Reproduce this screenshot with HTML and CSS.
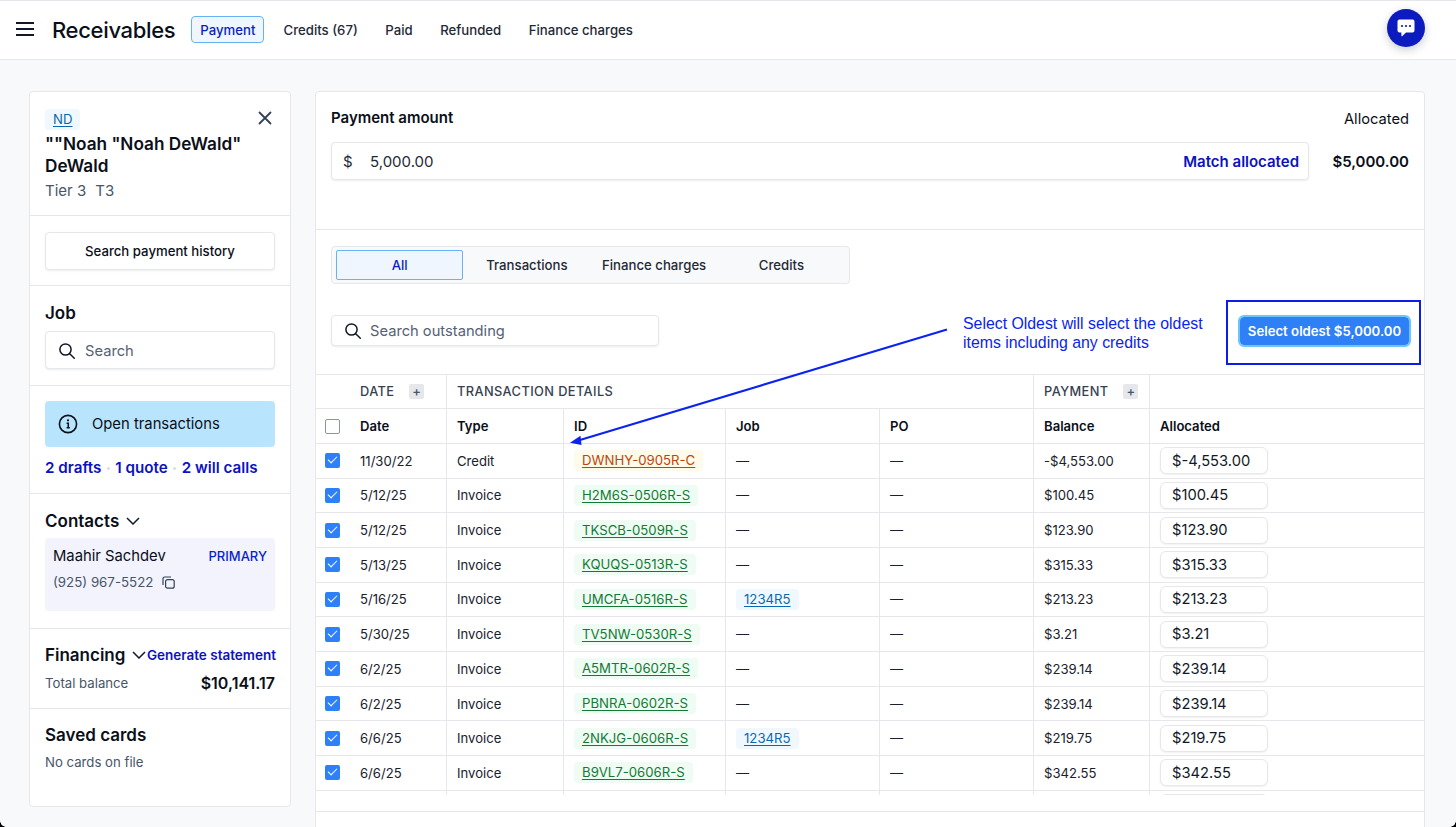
FILE: index.html
```html
<!DOCTYPE html>
<html lang="en">
<head>
<meta charset="utf-8">
<title>Receivables</title>
<link rel="stylesheet" href="styles.css">
</head>
<body>
<header class="topbar">
  <svg class="menu" width="18" height="14" viewBox="0 0 18 14"><path d="M0 1h18M0 7h18M0 13h18" stroke="#111827" stroke-width="2"/></svg>
  <h1 class="title">Receivables</h1>
  <nav class="nav">
    <a class="nav-item active">Payment</a>
    <a class="nav-item">Credits (67)</a>
    <a class="nav-item">Paid</a>
    <a class="nav-item">Refunded</a>
    <a class="nav-item">Finance charges</a>
  </nav>
  <button class="chat">
    <svg width="20" height="20" viewBox="0 0 20 20"><path d="M3.5 1.5h13a2 2 0 0 1 2 2v9a2 2 0 0 1-2 2H10l-3.6 3.6c-.4.4-1 .1-1-.4v-3.2H3.5a2 2 0 0 1-2-2v-9a2 2 0 0 1 2-2z" fill="#fff"/><circle cx="6" cy="8" r="1.1" fill="#0b1bbd"/><circle cx="10" cy="8" r="1.1" fill="#0b1bbd"/><circle cx="14" cy="8" r="1.1" fill="#0b1bbd"/></svg>
  </button>
</header>
<main class="main">
  <aside class="side">
    <section class="s s-head">
      <div class="head-top">
        <a class="tag tag-blue">ND</a>
        <svg class="close" width="14" height="14" viewBox="0 0 14 14"><path d="M1.5 1.5l11 11M12.5 1.5l-11 11" stroke="#334155" stroke-width="1.8" stroke-linecap="round"/></svg>
      </div>
      <div class="name">""Noah "Noah DeWald" DeWald</div>
      <div class="tier"><span>Tier 3</span><span>T3</span></div>
    </section>
    <section class="s s-btn"><button class="ghost">Search payment history</button></section>
    <section class="s s-job">
      <h2 class="h">Job</h2>
      <div class="field side-search">
        <svg width="18" height="18" viewBox="0 0 18 18"><circle cx="7.5" cy="7.5" r="5.6" fill="none" stroke="#111827" stroke-width="1.5"/><path d="M11.7 11.7l4.6 4.6" stroke="#111827" stroke-width="1.5" stroke-linecap="round"/></svg>
        <span class="ph">Search</span>
      </div>
    </section>
    <section class="s s-open">
      <div class="open-box">
        <svg width="20" height="20" viewBox="0 0 20 20"><circle cx="10" cy="10" r="8.6" fill="none" stroke="#0b0f19" stroke-width="1.6"/><circle cx="10" cy="6.3" r="1.1" fill="#0b0f19"/><path d="M8.6 9.3H10.3V13.6M8.6 13.8h3.2" fill="none" stroke="#0b0f19" stroke-width="1.5"/></svg>
        <span>Open transactions</span>
      </div>
      <div class="open-links"><a>2 drafts</a><i></i><a>1 quote</a><i></i><a>2 will calls</a></div>
    </section>
    <section class="s s-contacts">
      <h2 class="h h-row">Contacts <svg width="14" height="8" viewBox="0 0 14 8"><path d="M1 1l6 6 6-6" fill="none" stroke="#111827" stroke-width="1.5"/></svg></h2>
      <div class="contact">
        <div class="contact-top"><span class="c-name">Maahir Sachdev</span><span class="primary">PRIMARY</span></div>
        <div class="phone">(925) 967-5522
          <svg width="13" height="13" viewBox="0 0 13 13"><rect x="3.6" y="3.6" width="8.6" height="8.6" rx="2" fill="none" stroke="#334155" stroke-width="1.2"/><path d="M1 9V2.4A1.6 1.6 0 0 1 2.6 1H9" fill="none" stroke="#334155" stroke-width="1.2"/></svg>
        </div>
      </div>
    </section>
    <section class="s s-fin">
      <div class="fin-top">
        <h2 class="h h-row">Financing <svg width="14" height="8" viewBox="0 0 14 8"><path d="M1 1l6 6 6-6" fill="none" stroke="#111827" stroke-width="1.5"/></svg></h2>
        <a class="gen">Generate statement</a>
      </div>
      <div class="fin-row"><span class="muted">Total balance</span><b class="bal">$10,141.17</b></div>
    </section>
    <section class="s s-cards">
      <h2 class="h">Saved cards</h2>
      <div class="muted">No cards on file</div>
    </section>
  </aside>

  <section class="panel">
    <div class="pay">
      <div class="pay-labels"><span class="pay-title">Payment amount</span><span class="pay-alloc">Allocated</span></div>
      <div class="pay-row">
        <div class="field pay-input"><span class="dollar">$</span><span class="amount">5,000.00</span><a class="match">Match allocated</a></div>
        <b class="pay-total">$5,000.00</b>
      </div>
    </div>
    <div class="filters">
      <div class="tabs">
        <a class="tab on">All</a><a class="tab">Transactions</a><a class="tab">Finance charges</a><a class="tab">Credits</a>
      </div>
      <div class="tools">
        <div class="field out-search">
          <svg width="18" height="18" viewBox="0 0 18 18"><circle cx="7.5" cy="7.5" r="5.6" fill="none" stroke="#111827" stroke-width="1.5"/><path d="M11.7 11.7l4.6 4.6" stroke="#111827" stroke-width="1.5" stroke-linecap="round"/></svg>
          <span class="ph">Search outstanding</span>
        </div>
        <button class="oldest">Select oldest $5,000.00</button>
      </div>
    </div>

    <div class="grid-wrap">
      <div class="grid">
        <div class="c gh g-date">DATE <span class="plus">+</span></div>
        <div class="c gh g-det">TRANSACTION DETAILS</div>
        <div class="c gh">PAYMENT <span class="plus">+</span></div>
        <div class="c gh end"></div>

        <div class="c th first"><span class="cb off"></span>Date</div>
        <div class="c th">Type</div>
        <div class="c th">ID</div>
        <div class="c th">Job</div>
        <div class="c th">PO</div>
        <div class="c th">Balance</div>
        <div class="c th end">Allocated</div>

        <div class="c first"><span class="cb"></span>11/30/22</div><div class="c">Credit</div><div class="c"><a class="tag tag-o">DWNHY-0905R-C</a></div><div class="c">—</div><div class="c">—</div><div class="c">-$4,553.00</div><div class="c end"><span class="inp">$-4,553.00</span></div>

        <div class="c first"><span class="cb"></span>5/12/25</div><div class="c">Invoice</div><div class="c"><a class="tag tag-g">H2M6S-0506R-S</a></div><div class="c">—</div><div class="c">—</div><div class="c">$100.45</div><div class="c end"><span class="inp">$100.45</span></div>

        <div class="c first"><span class="cb"></span>5/12/25</div><div class="c">Invoice</div><div class="c"><a class="tag tag-g">TKSCB-0509R-S</a></div><div class="c">—</div><div class="c">—</div><div class="c">$123.90</div><div class="c end"><span class="inp">$123.90</span></div>

        <div class="c first"><span class="cb"></span>5/13/25</div><div class="c">Invoice</div><div class="c"><a class="tag tag-g">KQUQS-0513R-S</a></div><div class="c">—</div><div class="c">—</div><div class="c">$315.33</div><div class="c end"><span class="inp">$315.33</span></div>

        <div class="c first"><span class="cb"></span>5/16/25</div><div class="c">Invoice</div><div class="c"><a class="tag tag-g">UMCFA-0516R-S</a></div><div class="c"><a class="tag tag-blue">1234R5</a></div><div class="c">—</div><div class="c">$213.23</div><div class="c end"><span class="inp">$213.23</span></div>

        <div class="c first"><span class="cb"></span>5/30/25</div><div class="c">Invoice</div><div class="c"><a class="tag tag-g">TV5NW-0530R-S</a></div><div class="c">—</div><div class="c">—</div><div class="c">$3.21</div><div class="c end"><span class="inp">$3.21</span></div>

        <div class="c first"><span class="cb"></span>6/2/25</div><div class="c">Invoice</div><div class="c"><a class="tag tag-g">A5MTR-0602R-S</a></div><div class="c">—</div><div class="c">—</div><div class="c">$239.14</div><div class="c end"><span class="inp">$239.14</span></div>

        <div class="c first"><span class="cb"></span>6/2/25</div><div class="c">Invoice</div><div class="c"><a class="tag tag-g">PBNRA-0602R-S</a></div><div class="c">—</div><div class="c">—</div><div class="c">$239.14</div><div class="c end"><span class="inp">$239.14</span></div>

        <div class="c first"><span class="cb"></span>6/6/25</div><div class="c">Invoice</div><div class="c"><a class="tag tag-g">2NKJG-0606R-S</a></div><div class="c"><a class="tag tag-blue">1234R5</a></div><div class="c">—</div><div class="c">$219.75</div><div class="c end"><span class="inp">$219.75</span></div>

        <div class="c first"><span class="cb"></span>6/6/25</div><div class="c">Invoice</div><div class="c"><a class="tag tag-g">B9VL7-0606R-S</a></div><div class="c">—</div><div class="c">—</div><div class="c">$342.55</div><div class="c end"><span class="inp">$342.55</span></div>

        <div class="c first"></div><div class="c"></div><div class="c"></div><div class="c"></div><div class="c"></div><div class="c"></div><div class="c end"><span class="inp"></span></div>
      </div>
    </div>
    <div class="panel-foot"></div>

    <div class="note">Select Oldest will select the oldest<br>items including any credits</div>
    <div class="note-box"></div>
    <svg class="arrow" width="400" height="130" viewBox="0 0 400 130"><path d="M381 1.5L14 112" stroke="#0a23ee" stroke-width="2.2" fill="none"/><path d="M4 114.7L14.5 107.7L15.5 117Z" fill="#0a23ee"/></svg>
  </section>
</main>
</body>
</html>
```
FILE: styles.css
```css
* { box-sizing: border-box; }
html, body { margin: 0; height: 827px; overflow: hidden; }
body { font-family: Inter, "Noto Sans", sans-serif; background: #f8f9fb; color: #0b0f19; font-size: 13px; }
body::before, body::after { content: ""; position: fixed; bottom: 0; width: 6px; height: 6px; z-index: 5; }
body::before { left: 0; background: radial-gradient(circle at 100% 0, transparent 5.5px, #000 6px); }
body::after { right: 0; background: radial-gradient(circle at 0 0, transparent 5.5px, #000 6px); }
a { color: inherit; }
button { font-family: inherit; cursor: pointer; }
h1, h2 { margin: 0; }

.topbar { height: 60px; background: #fff; border-top: 1px solid #e5e7eb; border-bottom: 1px solid #e5e7eb; display: flex; align-items: center; padding: 0 31px 1px 16px; }
.menu { flex: none; margin: -2px 18px 0 0; }
.title { font-size: 22px; font-weight: 500; letter-spacing: -.33px; color: #0b0f19; margin-right: 16px; }
.nav { display: flex; align-items: center; gap: 3px; }
.nav-item { font-size: 13.2px; font-weight: 500; color: #1f2937; padding: 0 8px; height: 27px; line-height: 26px; border: 1px solid transparent; border-radius: 4px; margin-right: 6.5px; }
.nav-item.active { color: #0b1fc0; background: #eff6ff; border-color: #66b2f5; margin-right: 7px; }
.chat { margin: -4px 0 0 auto; width: 38px; height: 38px; border-radius: 50%; border: 0; background: #0b1bbd; box-shadow: 0 3px 8px rgba(15, 23, 42, .22); display: flex; align-items: center; justify-content: center; padding: 0; }

.main { display: flex; gap: 24px; padding: 31px 31px 0 29px; }
.side { flex: none; width: 262px; height: 716px; background: #fff; border: 1px solid #e5e7eb; border-radius: 4px; }
.s { padding: 16px 15px; border-bottom: 1px solid #e5e7eb; }
.s:last-child { border-bottom: 0; }
.s-head { height: 124px; padding-top: 17px; }
.head-top { display: flex; justify-content: space-between; align-items: flex-start; height: 21px; }
.close { margin: 2px 3px 0 0; }
.name { font-size: 17.2px; font-weight: 600; line-height: 22px; color: #0b0f19; margin-top: 3px; width: 224px; }
.tier { display: flex; gap: 9px; font-size: 15px; line-height: 20px; color: #475569; margin-top: 4px; }
.s-btn { height: 70px; }
.ghost { width: 100%; height: 38px; background: #fff; border: 1px solid #e5e7eb; border-radius: 4px; box-shadow: 0 1px 2px rgba(15, 23, 42, .08); font-size: 13.2px; font-weight: 500; color: #0b0f19; }
.s-job { height: 100px; padding-top: 16px; }
.h { font-size: 17px; font-weight: 600; line-height: 22px; color: #0b0f19; }
.h-row { display: flex; align-items: center; gap: 7px; }
.field { background: #fff; border: 1px solid #e5e7eb; border-radius: 4px; box-shadow: 0 1px 2px rgba(15, 23, 42, .08); display: flex; align-items: center; }
.ph { font-size: 14.7px; color: #566176; }
.side-search { height: 38px; margin-top: 7px; padding: 1px 0 0 12px; gap: 9px; }
.s-open { height: 108px; padding-top: 15px; }
.open-box { height: 46px; background: #b8e5fd; border-radius: 4px; display: flex; align-items: center; padding-left: 13px; gap: 14px; font-size: 14.8px; color: #0b0f19; }
.open-links { display: flex; align-items: center; margin-top: 11px; font-size: 15.2px; font-weight: 600; color: #0b12c0; line-height: 20px; }
.open-links i { width: 3px; height: 3px; border-radius: 50%; background: #d8dce4; margin: 0 5.5px; }
.s-contacts { height: 135px; padding-top: 16px; }
.contact { height: 73px; margin-top: 6px; background: #f2f3fd; border-radius: 4px; padding: 8px 8px; }
.contact-top { display: flex; justify-content: space-between; align-items: center; line-height: 20px; }
.c-name { font-size: 14.8px; color: #0b0f19; }
.primary { font-size: 13px; font-weight: 500; color: #0b1fd0; }
.phone { display: flex; align-items: center; gap: 9px; margin-top: 7px; font-size: 13.3px; line-height: 18px; color: #475569; }
.s-fin { height: 80px; padding-top: 15px; }
.fin-top { display: flex; align-items: center; justify-content: space-between; width: 231px; white-space: nowrap; }
.gen { font-size: 13.5px; font-weight: 600; color: #0b12c0; }
.fin-row { display: flex; justify-content: space-between; align-items: center; margin-top: 7px; line-height: 20px; }
.muted { font-size: 13.2px; color: #475569; }
.bal { font-size: 16px; font-weight: 600; color: #0b0f19; }
.s-cards { padding-top: 15px; }
.s-cards .muted { margin-top: 6px; line-height: 20px; }

.panel { flex: 1; position: relative; height: 760px; background: #fff; border: 1px solid #e5e7eb; border-radius: 4px; }
.pay { height: 138px; padding: 13px 15px 0; border-bottom: 1px solid #e5e7eb; }
.pay-labels { display: flex; justify-content: space-between; align-items: center; height: 24px; }
.pay-title { font-size: 15px; font-weight: 600; color: #0b0f19; }
.pay-alloc { font-size: 14.7px; color: #0b0f19; margin-top: 3px; }
.pay-row { display: flex; align-items: center; justify-content: space-between; margin-top: 13px; }
.pay-input { width: 978px; height: 38px; padding: 0 9px 0 11px; font-size: 15px; }
.dollar { width: 27px; color: #1f2937; }
.amount { color: #1f2937; }
.match { margin-left: auto; font-size: 15px; font-weight: 600; color: #0b12c0; }
.pay-total { font-size: 15px; font-weight: 600; }

.filters { padding: 16px 15px 0; }
.tabs { width: 519px; height: 38px; padding: 3px 4px; background: #f8f9fb; border: 1px solid #e5e7eb; border-radius: 4px; display: grid; grid-template-columns: repeat(4, 1fr); }
.tab { display: flex; align-items: center; justify-content: center; font-size: 13.2px; font-weight: 500; color: #1f2937; border-radius: 2px; }
.tab.on { color: #0b1fc0; background: #eff6ff; border: 1px solid #66b2f5; }
.tools { display: flex; justify-content: space-between; align-items: center; margin-top: 31px; }
.out-search { width: 328px; height: 31px; padding-left: 12px; gap: 8px; }
.oldest { height: 28px; width: 169px; background: #2f80f7; color: #fff; border: 0; outline: 2px solid #6cc5fb; border-radius: 4px; font-size: 13.2px; font-weight: 600; padding: 0; }

.grid-wrap { margin-top: 27.5px; height: 421.5px; overflow: hidden; border-top: 1px solid #e5e7eb; }
.grid { display: grid; grid-template-columns: 131px 117px 162px 154px 154px 116px 1fr; grid-auto-rows: 34.7px; }
.c { display: flex; align-items: center; padding-left: 10px; border-right: 1px solid #e5e7eb; border-bottom: 1px solid #e5e7eb; font-size: 13.1px; color: #1a202c; min-width: 0; }
.c.end { border-right: 0; }
.gh { font-size: 12.8px; font-weight: 500; color: #374151; letter-spacing: .4px; gap: 8px; }
.g-date { padding-left: 44px; }
.g-det { grid-column: span 4; }
.plus { width: 15px; height: 15px; background: #e5e7eb; border-radius: 2px; display: inline-flex; align-items: center; justify-content: center; font-size: 13px; line-height: 1; color: #475569; margin-left: 7px; }
.th { font-weight: 600; color: #0b0f19; }
.first { gap: 20px; padding-left: 9px; }
.cb { flex: none; width: 15px; height: 15px; border-radius: 2px; background-color: #2f80f7; position: relative; }
.cb::after { content: ""; position: absolute; left: 3px; top: 3px; width: 8px; height: 4px; border-left: 1.5px solid #fff; border-bottom: 1.5px solid #fff; transform: rotate(-45deg); }
.cb.off { background: #fff; border: 1.5px solid #8a94a6; }
.cb.off::after { display: none; }
.tag { display: inline-block; height: 21px; line-height: 21px; padding: 0 8px; border-radius: 4px; text-decoration: underline; font-size: 13.2px; text-underline-offset: 2px; }
.tag-o { background: #fffbeb; color: #bf4408; }
.tag-g { background: #effcf3; color: #137a36; }
.tag-blue { background: #eff8ff; color: #0b68b0; }
.inp { display: flex; align-items: center; width: 108px; height: 27px; padding-left: 11px; background: #fff; border: 1px solid #e5e7eb; border-radius: 6px; box-shadow: 0 1px 2px rgba(15, 23, 42, .06); font-size: 14.7px; color: #111827; }
.panel-foot { margin-top: 16px; border-top: 1px solid #e5e7eb; }

.note { position: absolute; left: 647px; top: 222px; font-family: "Liberation Sans", Arial, sans-serif; font-size: 15.85px; line-height: 19px; color: #0a23ee; white-space: nowrap; }
.note-box { position: absolute; left: 910px; top: 208px; width: 195px; height: 65px; border: 2px solid #0a1ee8; }
.arrow { position: absolute; left: 250px; top: 236px; }
```
